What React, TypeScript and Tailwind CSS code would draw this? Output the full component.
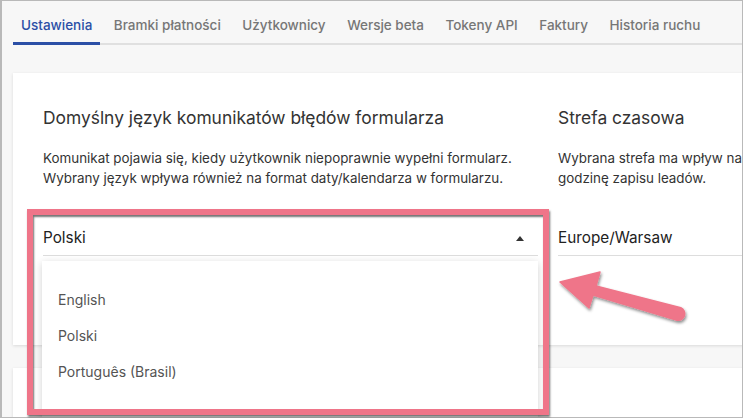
import React from "react";

const tabs = [
  "Ustawienia",
  "Bramki płatności",
  "Użytkownicy",
  "Wersje beta",
  "Tokeny API",
  "Faktury",
  "Historia ruchu",
];

export default function App() {
  return (
    <div className="relative w-[744px] h-[418px] overflow-hidden bg-white font-['Inter','Noto_Sans',sans-serif]">
      <div className="w-[743px] h-[418px] border border-l-2 border-[#b9b9b9] bg-[#f7f7f7] overflow-hidden">
        {/* Tabs */}
        <div className="ml-[11px] flex gap-[5.5px] border-b-2 border-[#e0e0e0]">
          {tabs.map((t, i) => (
            <div
              key={t}
              className={
                i === 0
                  ? "h-[44px] -mb-[2px] px-2 pt-[14px] text-[13.5px] leading-5 font-medium text-[#2b4fa6] border-b-[3px] border-[#2b4fa6] whitespace-nowrap"
                  : "h-[44px] -mb-[2px] px-2 pt-[14px] text-[13.5px] leading-5 font-medium text-[#767676] whitespace-nowrap"
              }
            >
              {t}
            </div>
          ))}
        </div>

        {/* Card */}
        <div className="ml-[11px] mt-[28px] w-[1100px] h-[272px] bg-white shadow-[0_1px_3px_rgba(0,0,0,0.12)]">
          <div className="flex gap-[20px] pl-[30px] pt-[31px]">
            <div className="relative w-[495px] shrink-0">
              <div className="text-[17.4px] leading-7 text-[#333] whitespace-nowrap">
                Domyślny język komunikatów błędów formularza
              </div>
              <div className="mt-4 text-[13.4px] leading-5 text-[#333]">
                <div className="whitespace-nowrap">
                  Komunikat pojawia się, kiedy użytkownik niepoprawnie wypełni formularz.
                </div>
                <div className="whitespace-nowrap">
                  Wybrany język wpływa również na format daty/kalendarza w formularzu.
                </div>
              </div>
              <div className="mt-[34px] h-[34px] border-b border-[#dddddd] flex items-center justify-between pr-[14px]">
                <span className="text-[15.3px] text-[#222]">Polski</span>
                <svg width="8" height="5" viewBox="0 0 8 5">
                  <polygon points="0,5 8,5 4,0" fill="#333" />
                </svg>
              </div>
              <div className="absolute left-[-1px] top-[157px] w-[496px] h-[200px] bg-white shadow-[0_2px_8px_rgba(0,0,0,0.18)] pt-5">
                {["English", "Polski", "Português (Brasil)"].map((o) => (
                  <div key={o} className="h-9 flex items-center pl-4 text-[14px] text-[#545454]">
                    {o}
                  </div>
                ))}
              </div>
            </div>
            <div className="w-[495px] shrink-0">
              <div className="text-[17.4px] leading-7 text-[#333] whitespace-nowrap">
                Strefa czasowa
              </div>
              <div className="mt-4 text-[13.4px] leading-5 text-[#333]">
                <div className="whitespace-nowrap">Wybrana strefa ma wpływ na</div>
                <div className="whitespace-nowrap">godzinę zapisu leadów.</div>
              </div>
              <div className="mt-[34px] h-[34px] border-b border-[#dddddd] flex items-center">
                <span className="text-[15.3px] text-[#222]">Europe/Warsaw</span>
              </div>
            </div>
          </div>
        </div>

        {/* Second card */}
        <div className="ml-[11px] mt-[23px] w-[1100px] h-[100px] bg-white shadow-[0_1px_3px_rgba(0,0,0,0.12)]" />
      </div>

      {/* Annotation: highlight frame */}
      <div className="absolute left-[27px] top-[209px] w-[522px] h-[206px] border-[6px] border-[#ef7589] shadow-[1px_2px_2px_rgba(0,0,0,0.55),inset_1px_2px_2px_rgba(0,0,0,0.55)]" />

      {/* Annotation: arrow */}
      <svg className="absolute left-0 top-0" width="744" height="418" viewBox="0 0 744 418">
        <defs>
          <filter id="sh" x="-20%" y="-20%" width="140%" height="140%">
            <feDropShadow dx="1" dy="2" stdDeviation="1.5" floodColor="#000" floodOpacity="0.45" />
          </filter>
        </defs>
        <path
          d="M560 282 L600 272 L596 286 L680.8 307.8 A6.5 6.5 0 0 1 677.2 320.2 L593 295 L589 308 Z"
          fill="#ef7589"
          stroke="#ef7589"
          strokeWidth="1.5"
          strokeLinejoin="round"
          filter="url(#sh)"
        />
      </svg>
    </div>
  );
}
